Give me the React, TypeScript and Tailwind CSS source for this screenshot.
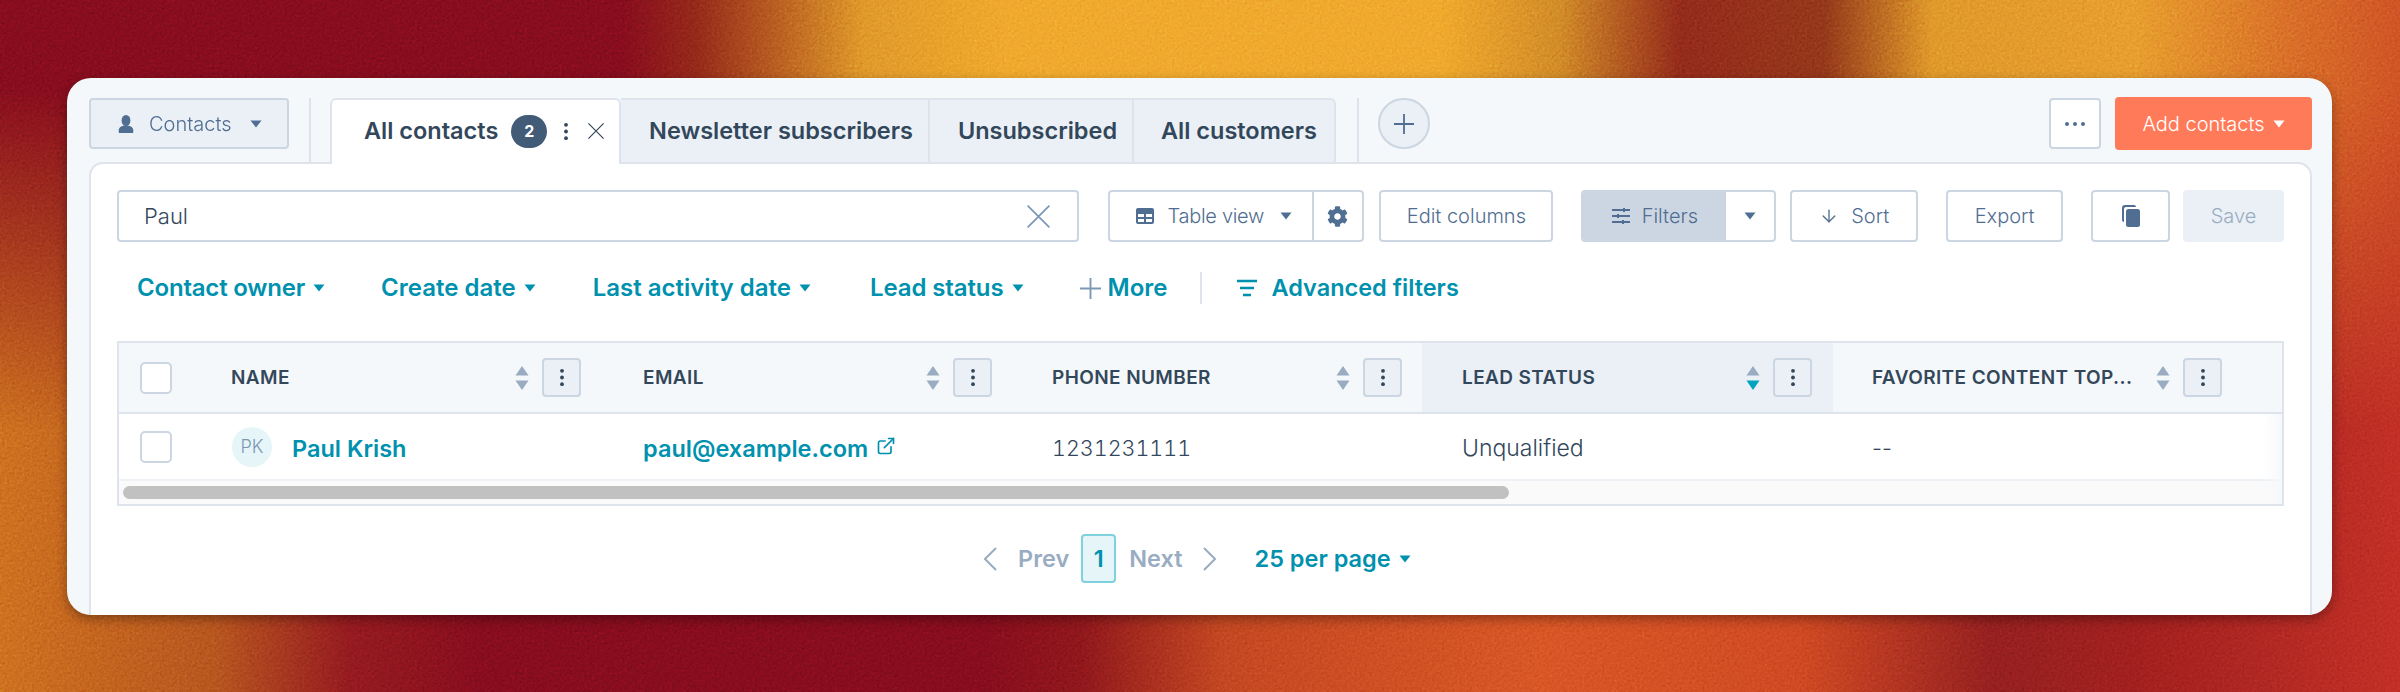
import React from "react";
import { ExternalLink, ArrowDown } from "lucide-react";
import { FaCog } from "react-icons/fa";

const font = "font-['Inter','Liberation_Sans',sans-serif]";

function Caret({ className = "" }: { className?: string }) {
  return (
    <svg viewBox="0 0 12 8" className={`w-[12px] h-[8px] fill-current ${className}`}>
      <path d="M0.500 0.500h11L6 7.500z" />
    </svg>
  );
}

function Dots({ className = "" }: { className?: string }) {
  return (
    <svg viewBox="0 0 4 20" className={`w-[4px] h-[19px] fill-current ${className}`}>
      <circle cx="2" cy="3" r="2" />
      <circle cx="2" cy="10" r="2" />
      <circle cx="2" cy="17" r="2" />
    </svg>
  );
}

function PlusMark({ className = "" }: { className?: string }) {
  return (
    <svg viewBox="0 0 20 20" className={`stroke-current ${className}`} strokeWidth="1.800" fill="none">
      <path d="M10 0v20M0 10h20" />
    </svg>
  );
}

function Cross({ className = "" }: { className?: string }) {
  return (
    <svg viewBox="0 0 20 20" className={`stroke-current ${className}`} strokeWidth="1.500" fill="none">
      <path d="M0.500 0.500l19 19M19.500 0.500l-19 19" />
    </svg>
  );
}

function Chevron({ right = false }: { right?: boolean }) {
  return (
    <svg viewBox="0 0 13 24" className="w-[13px] h-[24px] stroke-[#99acc2]" strokeWidth="2" fill="none">
      <path d={right ? "M1 1l11 11L1 23" : "M12 1L1 12l11 11"} />
    </svg>
  );
}

function Divider({ className = "h-[52px]" }: { className?: string }) {
  return <div className={`w-[2px] bg-[#dfe3eb] ${className}`} />;
}

function ToolButton({ className = "", children }: { className?: string; children: React.ReactNode }) {
  return (
    <div className={`h-[52px] flex items-center justify-center gap-3 rounded-[4px] border-2 border-[#cbd6e2] bg-white text-[20px] font-[350] text-[#506e91] ${className}`}>
      {children}
    </div>
  );
}

function Sort({ active = false }: { active?: boolean }) {
  return (
    <svg viewBox="0 0 14 24" className="w-[14px] h-[24px]">
      <path d="M7 0l6.500 9.500H.5z" fill="#99acc2" />
      <path d="M7 24L.5 14.500h13z" fill={active ? "#00a4bd" : "#99acc2"} />
    </svg>
  );
}

function HeaderCell({ label, box, active = false }: { label: string; box: string; active?: boolean }) {
  return (
    <div className={`${box} shrink-0 h-full flex items-center ${active ? "bg-[#eaf0f6]" : ""}`}>
      <span className="flex-1 pt-[2px] text-[19px] font-semibold tracking-[0.4px] text-[#33475b] whitespace-nowrap">{label}</span>
      <Sort active={active} />
      <div className="ml-[13px] w-[39px] h-[39px] flex items-center justify-center rounded-[4px] border-2 border-[#cbd6e2] bg-[#eaf0f6] text-[#33475b]">
        <Dots />
      </div>
    </div>
  );
}

function Checkbox() {
  return <div className="w-[32px] h-[32px] rounded-[5px] border-2 border-[#cbd6e2] bg-white" />;
}

export default function App() {
  return (
    <div className={`relative w-[2400px] h-[692px] overflow-hidden pt-[78px] pl-[67px] ${font}`}>
      <div className="absolute inset-0 bg-[linear-gradient(to_right,#cf7220_0%,#b8561f_9%,#961b20_14.500%,#880d1e_20%,#880d1e_41%,#90171c_45%,#c44822_51%,#d95726_64%,#d04a23_75%,#962020_83%,#a2201f_89%,#c23026_100%)]" />
      <div className="absolute inset-0 bg-[linear-gradient(to_right,#880d1e_0%,#880d1e_26%,#96291a_29%,#e09a2a_36%,#f0aa2d_42%,#f0aa2d_60%,#d28c28_65%,#952b1b_70%,#95381b_76%,#e09a2a_80.500%,#e89f2e_89%,#d86c28_96%,#d05526_100%)] [mask-image:linear-gradient(to_bottom,black_90px,transparent_430px)]" />
      <svg className="absolute inset-0 w-full h-full mix-blend-overlay opacity-40">
        <filter id="grain" colorInterpolationFilters="sRGB">
          <feTurbulence type="fractalNoise" baseFrequency="0.4" numOctaves="2" />
          <feColorMatrix type="matrix" values="0.33 0.33 0.33 0 0 0.33 0.33 0.33 0 0 0.33 0.33 0.33 0 0 0 0 0 0 1" />
        </filter>
        <rect width="100%" height="100%" filter="url(#grain)" />
      </svg>
      <div className="relative w-[2265px] h-[537px] rounded-[24px] bg-[#f5f8fa] shadow-[0_4px_12px_rgba(0,0,0,0.35)] flex flex-col pt-[20px] pl-[22px] pr-[20px] overflow-hidden">
        <div className="flex h-[64px] shrink-0">
          <div className="w-[200px] h-[51px] rounded-[4px] border-2 border-[#cbd6e2] bg-[#eaf0f6] flex items-center pl-[27px] text-[20px] font-[350] text-[#506e91]">
            <svg viewBox="0 0 16 18" className="w-[16px] h-[18px] fill-current">
              <ellipse cx="8" cy="5.500" rx="4.400" ry="5.500" />
              <path d="M1 18c-1.500-5 2-7.500 7-7.500s8.500 2.500 7 7.500z" />
            </svg>
            <span className="ml-[15px]">Contacts</span>
            <Caret className="ml-[18px]" />
          </div>
          <Divider className="ml-[20px] h-[64px]" />
          <div className="ml-[19px] w-[291px] h-[66px] rounded-t-[6px] border-2 border-b-0 border-[#dfe3eb] bg-white flex items-center pl-[32px] pb-[2px] text-[23.500px] font-semibold text-[#33475b] relative z-10">
            All contacts
            <span className="ml-[13px] w-[36px] h-[33px] rounded-full bg-[#425b76] text-white text-[16px] font-bold flex items-center justify-center">2</span>
            <Dots className="ml-[17px]" />
            <Cross className="ml-[20px] w-[16px] h-[16px]" />
          </div>
          <div className="flex h-[64px] rounded-tr-[6px] border-2 border-l-0 border-b-0 border-[#dfe3eb] bg-[#eaf0f6] text-[23.500px] font-semibold text-[#33475b]">
            <div className="w-[309px] pl-[13px] flex items-center justify-center border-r-2 border-[#dfe3eb]">Newsletter subscribers</div>
            <div className="w-[204px] pl-[13px] flex items-center justify-center border-r-2 border-[#dfe3eb]">Unsubscribed</div>
            <div className="w-[200px] pl-[10px] flex items-center justify-center">All customers</div>
          </div>
          <Divider className="ml-[21px] h-[64px]" />
          <div className="ml-[19px] w-[52px] h-[51px] rounded-full border-2 border-[#cbd6e2] bg-[#eaf0f6] flex items-center justify-center text-[#506e91]">
            <PlusMark className="w-[20px] h-[20px]" />
          </div>
          <div className="ml-auto w-[52px] h-[51px] rounded-[4px] border-2 border-[#cbd6e2] bg-white flex items-center justify-center text-[#506e91]">
            <svg viewBox="0 0 20 4" className="w-[20px] h-[4px] fill-current">
              <circle cx="2" cy="2" r="2" />
              <circle cx="10" cy="2" r="2" />
              <circle cx="18" cy="2" r="2" />
            </svg>
          </div>
          <div className="ml-[14px] w-[197px] h-[53px] -mt-[1px] rounded-[4px] bg-[#ff7a59] flex items-center justify-center gap-2 text-[20px] font-[350] text-white">
            Add contacts
            <Caret />
          </div>
        </div>
        <div className="flex-1 rounded-t-[14px] border-2 border-b-0 border-[#dfe3eb] bg-white pt-[26px] px-[26px]">
          <div className="flex items-center">
            <div className="w-[962px] h-[52px] rounded-[4px] border-2 border-[#cbd6e2] flex items-center justify-between pl-[25px] pr-[27px] text-[22px] font-[350] text-[#33475b]">
              Paul
              <Cross className="w-[23px] h-[23px] text-[#7c98b6]" />
            </div>
            <Divider className="ml-[14px]" />
            <div className="ml-[13px] w-[257px] h-[52px] rounded-[4px] border-2 border-[#cbd6e2] flex text-[20px] font-[350] text-[#506e91]">
              <div className="w-[204px] flex items-center pl-[26px] border-r-2 border-[#cbd6e2]">
                <svg viewBox="0 0 18 16" className="w-[18px] h-[16px] fill-current">
                  <path fillRule="evenodd" d="M2 0h14a2 2 0 0 1 2 2v12a2 2 0 0 1-2 2H2a2 2 0 0 1-2-2V2a2 2 0 0 1 2-2zm0 6v3h6V6zm8 0v3h6V6zm-8 5v3h6v-3zm8 0v3h6v-3z" />
                </svg>
                <span className="ml-[14px] tracking-[-0.3px]">Table view</span>
                <Caret className="ml-[16px]" />
              </div>
              <div className="flex-1 flex items-center justify-center">
                <FaCog className="w-[21px] h-[21px]" />
              </div>
            </div>
            <ToolButton className="ml-[15px] w-[174px]">Edit columns</ToolButton>
            <Divider className="ml-[13px]" />
            <div className="ml-[13px] w-[195px] h-[52px] rounded-[4px] border-2 border-[#cbd6e2] flex overflow-hidden text-[20px] font-[350] text-[#506e91]">
              <div className="w-[143px] bg-[#cbd6e2] flex items-center justify-center gap-3">
                <svg viewBox="0 0 18 16" className="w-[18px] h-[16px] stroke-current" strokeWidth="2" fill="none">
                  <path d="M0 2h18M0 8h18M0 14h18M12 0v4M6 6v4M11 12v4" />
                </svg>
                Filters
              </div>
              <div className="flex-1 flex items-center justify-center">
                <Caret />
              </div>
            </div>
            <ToolButton className="ml-[14px] w-[128px]">
              <ArrowDown className="w-[20px] h-[24px]" strokeWidth={1.6} />
              Sort
            </ToolButton>
            <Divider className="ml-[13px]" />
            <ToolButton className="ml-[13px] w-[117px]">Export</ToolButton>
            <Divider className="ml-[13px]" />
            <ToolButton className="ml-[13px] w-[79px]">
              <svg viewBox="0 0 18 22" className="w-[18px] h-[22px] fill-current">
                <path d="M3 0h9a2 2 0 0 1 2 2H4a2 2 0 0 0-2 2v13a2 2 0 0 1-2-2V3a3 3 0 0 1 3-3z" />
                <rect x="4" y="4" width="14" height="18" rx="2.500" />
              </svg>
            </ToolButton>
            <div className="ml-[13px] w-[101px] h-[52px] rounded-[4px] bg-[#eaf0f6] flex items-center justify-center text-[20px] font-[350] text-[#99acc2]">Save</div>
          </div>
          <div className="mt-[26px] h-[40px] flex items-center pl-[20px] text-[24px] font-semibold text-[#0091ae]">
            <span className="tracking-[-0.2px]">Contact owner</span>
            <Caret className="ml-2" />
            <span className="ml-[56px]">Create date</span>
            <Caret className="ml-2" />
            <span className="ml-[57px]">Last activity date</span>
            <Caret className="ml-2" />
            <span className="ml-[59px] tracking-[-0.1px]">Lead status</span>
            <Caret className="ml-2" />
            <PlusMark className="ml-[56px] w-[21px] h-[21px] text-[#7c98b6]" />
            <span className="ml-[7px]">More</span>
            <Divider className="ml-[33px] h-[32px]" />
            <svg viewBox="0 0 22 18" className="ml-[34px] w-[22px] h-[18px] stroke-current" strokeWidth="2.400" fill="none">
              <path d="M1 2h20M4 9h14M7 16h8" />
            </svg>
            <span className="ml-[13px] text-[23.500px]">Advanced filters</span>
          </div>
          <div className="relative mt-[33px] w-[2167px] h-[165px] border-2 border-[#dfe3eb] flex flex-col overflow-hidden">
            <div className="h-[71px] shrink-0 flex items-center bg-[#f5f8fa] border-b-2 border-[#dfe3eb]">
              <div className="w-[72px] shrink-0 flex justify-end pr-[19px]"><Checkbox /></div>
              <HeaderCell label="NAME" box="w-[412px] pl-[40px] pr-[22px]" />
              <HeaderCell label="EMAIL" box="w-[409px] pl-[40px] pr-[20px]" />
              <HeaderCell label="PHONE NUMBER" box="w-[410px] pl-[40px] pr-[20px]" />
              <HeaderCell label="LEAD STATUS" box="w-[411px] pl-[40px] pr-[21px]" active />
              <HeaderCell label="FAVORITE CONTENT TOP..." box="w-[411px] pl-[39px] pr-[22px]" />
            </div>
            <div className="h-[67px] shrink-0 flex items-center border-b-2 border-[#eef1f5] text-[#33475b] bg-white">
              <div className="w-[72px] shrink-0 flex justify-end pr-[19px]"><Checkbox /></div>
              <div className="w-[412px] shrink-0 pl-[41px] flex items-center">
                <span className="w-[40px] h-[40px] rounded-full bg-[#e5f5f8] flex items-center justify-center text-[18px] font-[350] text-[#7c98b6]">PK</span>
                <span className="ml-[20px] pt-[4px] text-[23.500px] font-semibold text-[#0091ae]">Paul Krish</span>
              </div>
              <div className="w-[409px] shrink-0 pl-[40px] pt-[4px] flex items-center text-[#0091ae]">
                <span className="text-[23.500px] font-semibold">paul@example.com</span>
                <ExternalLink className="ml-[8px] mb-[5px] w-[20px] h-[20px]" strokeWidth={2} />
              </div>
              <div className="w-[410px] shrink-0 pl-[40px] pt-[4px] text-[21.500px] font-[350] tabular-nums">1231231111</div>
              <div className="w-[411px] shrink-0 pl-[40px] pt-[4px] text-[23px] font-[350]">Unqualified</div>
              <div className="w-[411px] shrink-0 pl-[39px] pt-[4px] text-[22px] font-[350]">--</div>
            </div>
            <div className="flex-1 flex items-center bg-[#fafafa] pl-[4px]">
              <div className="w-[1386px] h-[13px] rounded-full bg-[#c1c1c1]" />
            </div>
            <div className="absolute right-0 top-[71px] bottom-0 w-[18px] bg-gradient-to-r from-transparent to-[#f5f8fa]" />
          </div>
          <div className="mt-[28px] flex items-center pl-[867px] text-[23.500px] font-semibold">
            <Chevron />
            <span className="ml-[21px] text-[#99acc2]">Prev</span>
            <div className="ml-[12px] w-[35px] h-[49px] rounded-[4px] border-2 border-[#7fd1de] bg-[#e5f5f8] flex items-center justify-center text-[#0091ae]">1</div>
            <span className="ml-[13px] text-[#99acc2]">Next</span>
            <div className="ml-[20px]"><Chevron right /></div>
            <span className="ml-[39px] text-[#0091ae]">25 per page</span>
            <Caret className="ml-2 text-[#0091ae]" />
          </div>
        </div>
      </div>
    </div>
  );
}
